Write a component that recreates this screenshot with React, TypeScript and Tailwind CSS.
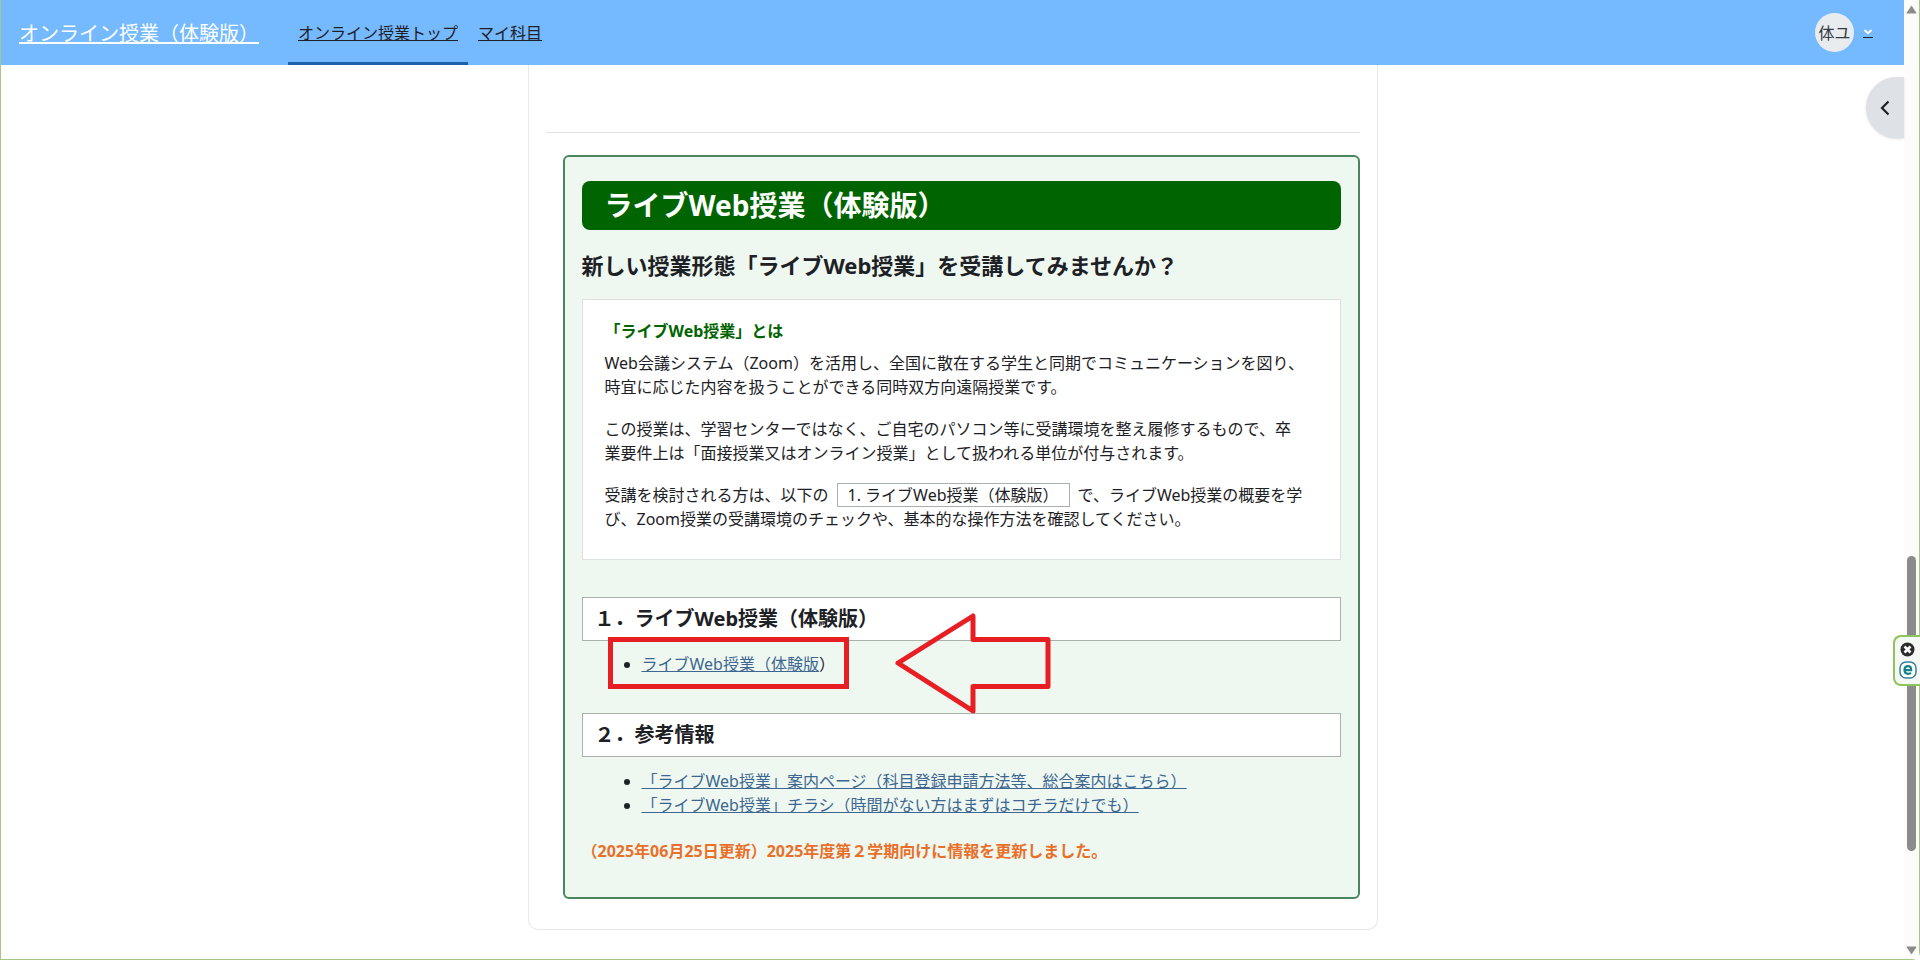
import type { ReactNode } from "react";

function TopBar() {
  return (
    <header className="flex h-[65px] items-stretch bg-[#75b9ff]">
      <a href="#home" className="ml-[18px] flex items-center pt-[2px] text-[20px] text-white underline">
        オンライン授業（体験版）
      </a>
      <nav className="ml-[29px] flex items-stretch text-[16px] text-[#1d2125]">
        <a
          href="#top"
          aria-current="page"
          className="flex items-center border-b-[3px] border-[#1b62a8] px-[10px] pt-[3px] underline"
        >
          オンライン授業トップ
        </a>
        <a href="#courses" className="flex items-center px-[10px] underline">
          マイ科目
        </a>
      </nav>
      <button type="button" aria-label="ユーザメニュー" className="mr-[30px] ml-auto flex items-center gap-2">
        <span className="flex size-[39px] items-center justify-center rounded-full bg-[#e9ecef] text-[16px] text-[#343a40]">
          体ユ
        </span>
        <svg width="12" height="12" viewBox="0 0 12 12" fill="none">
          <path d="M2.5 3 L6 6.2 L9.5 3" stroke="#fff" strokeWidth="1.8" />
          <path d="M1 10.5 H11" stroke="#1d2125" strokeWidth="1" />
        </svg>
      </button>
    </header>
  );
}

function SectionHeading({ children }: { children: ReactNode }) {
  return (
    <h3 className="mt-[37px] border border-[#a9b3ab] bg-white pl-3 text-[20px] leading-[42px] font-bold text-[#1d2125]">
      {children}
    </h3>
  );
}

function DocLink({ children }: { children: ReactNode }) {
  return (
    <a href="#doc" className="text-[#3d6690] underline">
      {children}
    </a>
  );
}

function IntroBox() {
  return (
    <div className="mt-5 border border-[#dbe3dc] bg-white pt-[19px] pr-[34px] pb-[28px] pl-[22px]">
      <h4 className="mb-2 font-bold text-[#006400]">「ライブWeb授業」とは</h4>
      <div className="flex flex-col gap-[18px]">
        <p>
          Web会議システム（Zoom）を活用し、全国に散在する学生と同期でコミュニケーションを図り、時宜に応じた内容を扱うことができる同時双方向遠隔授業です。
        </p>
        <p>
          この授業は、学習センターではなく、ご自宅のパソコン等に受講環境を整え履修するもので、卒業要件上は「面接授業又はオンライン授業」として扱われる単位が付与されます。
        </p>
        <p>
          受講を検討される方は、以下の
          <span className="mx-2 border border-[#a9b0ab] px-[10px]">1. ライブWeb授業（体験版）</span>
          で、ライブWeb授業の概要を学び、Zoom授業の受講環境のチェックや、基本的な操作方法を確認してください。
        </p>
      </div>
    </div>
  );
}

function LiveClassPanel() {
  return (
    <section className="ml-[17px] rounded-[6px] border-2 border-[#4a8560] bg-[#eef8f0] px-[17px] pt-6 pb-[34px]">
      <h1 className="rounded-[8px] bg-[#006400] pl-[23px] text-[28px] leading-[49px] font-bold text-white">
        ライブWeb授業（体験版）
      </h1>
      <h2 className="mt-[21px] text-[22px] leading-[28px] font-bold">
        新しい授業形態「ライブWeb授業」を受講してみませんか？
      </h2>
      <IntroBox />

      <SectionHeading>１．ライブWeb授業（体験版）</SectionHeading>
      <div className="relative">
        <ul className="mt-[11px] list-disc pl-[60px]">
          <li>
            <DocLink>ライブWeb授業（体験版</DocLink>）
          </li>
        </ul>
        <div className="pointer-events-none absolute -top-[15px] left-[26px] h-[52px] w-[241px] border-[5px] border-[#e81e25]" />
        <svg
          className="pointer-events-none absolute -top-[40px] left-[312px]"
          width="160"
          height="104"
          viewBox="0 0 160 104"
          fill="none"
        >
          <path
            d="M4 51 L79 4 V27.500 H154 V74.500 H79 V99 Z"
            stroke="#e81e25"
            strokeWidth="5"
            strokeLinejoin="round"
          />
        </svg>
      </div>

      <SectionHeading>２．参考情報</SectionHeading>
      <ul className="mt-3 list-disc pl-[60px]">
        <li>
          <DocLink>「ライブWeb授業」案内ページ（科目登録申請方法等、総合案内はこちら）</DocLink>
        </li>
        <li>
          <DocLink>「ライブWeb授業」チラシ（時間がない方はまずはコチラだけでも）</DocLink>
        </li>
      </ul>
      <p className="mt-[22px] font-bold text-[#e9702a]">
        （2025年06月25日更新）2025年度第２学期向けに情報を更新しました。
      </p>
    </section>
  );
}

function ScrollTrack() {
  return (
    <div className="flex w-[15px] shrink-0 flex-col items-center bg-[#fcfdfb] pt-[5px] pb-1">
      <svg width="11" height="9" viewBox="0 0 11 9" className="shrink-0">
        <path d="M5.500 0.500 L10.500 8 Q10.500 8.500 10 8.500 H1 Q0.500 8.500 0.500 8 Z" fill="#8b8b8b" />
      </svg>
      <div className="mt-[542px] h-[295px] w-[9px] shrink-0 rounded-full bg-[#8b8b8b]" />
      <svg width="11" height="9" viewBox="0 0 11 9" className="mt-auto shrink-0">
        <path d="M5.500 8.500 L0.500 1 Q0.500 0.500 1 0.500 H10 Q10.500 0.500 10.500 1 Z" fill="#8b8b8b" />
      </svg>
    </div>
  );
}

function FloatingWidget() {
  return (
    <div className="absolute top-[635px] -right-px flex w-[27px] flex-col items-center gap-1 rounded-l-[8px] border-2 border-r-0 border-[#8fc45a] bg-[#f4f9f5] py-[5px]">
      <button type="button" aria-label="閉じる" className="block">
        <svg width="15" height="15" viewBox="0 0 15 15">
          <circle cx="7.500" cy="7.500" r="7" fill="#2b2b2d" />
          <path d="M4.500 4.500 L10.500 10.500 M10.500 4.500 L4.500 10.500" stroke="#fff" strokeWidth="2.600" />
        </svg>
      </button>
      <button type="button" aria-label="拡張機能" className="block">
        <svg width="18" height="18" viewBox="0 0 18 18" fill="none">
          <rect x="1" y="1" width="16" height="16" rx="6" stroke="#3a7f93" strokeWidth="1.500" fill="#fff" />
          <path
            d="M5.600 9.200 H12.200 C12.200 6.500 10.900 5.200 9 5.200 C7 5.200 5.500 6.800 5.500 9 C5.500 11.400 7 12.800 9.200 12.800 C10.400 12.800 11.300 12.500 12 11.900"
            stroke="#15808a"
            strokeWidth="2.200"
          />
        </svg>
      </button>
    </div>
  );
}

export default function App() {
  return (
    <div
      lang="ja"
      className="relative flex min-h-screen rounded-br-[8px] border-x border-b border-[#a5c985] bg-white font-['Noto_Sans','Noto_Sans_CJK_JP',sans-serif] text-[16px] leading-[24px] text-[#1d2125]"
    >
      <div className="relative min-w-0 flex-1">
        <TopBar />
        <main className="mx-auto max-w-[850px] rounded-b-[10px] border border-t-0 border-[#e6e8ea] px-[17px] pt-[67px] pb-[30px]">
          <hr className="mb-[22px] border-[#dee2e6]" />
          <LiveClassPanel />
        </main>
        <button
          type="button"
          aria-label="ブロックドロワを開く"
          className="absolute top-[77px] right-0 flex h-[61px] w-[38px] items-center justify-center rounded-l-full bg-[#dee2e6] shadow-sm"
        >
          <svg width="10" height="16" viewBox="0 0 10 16" fill="none">
            <path d="M8.500 1.500 L2 8 L8.500 14.500" stroke="#1d2125" strokeWidth="2.200" />
          </svg>
        </button>
      </div>
      <ScrollTrack />
      <FloatingWidget />
    </div>
  );
}
